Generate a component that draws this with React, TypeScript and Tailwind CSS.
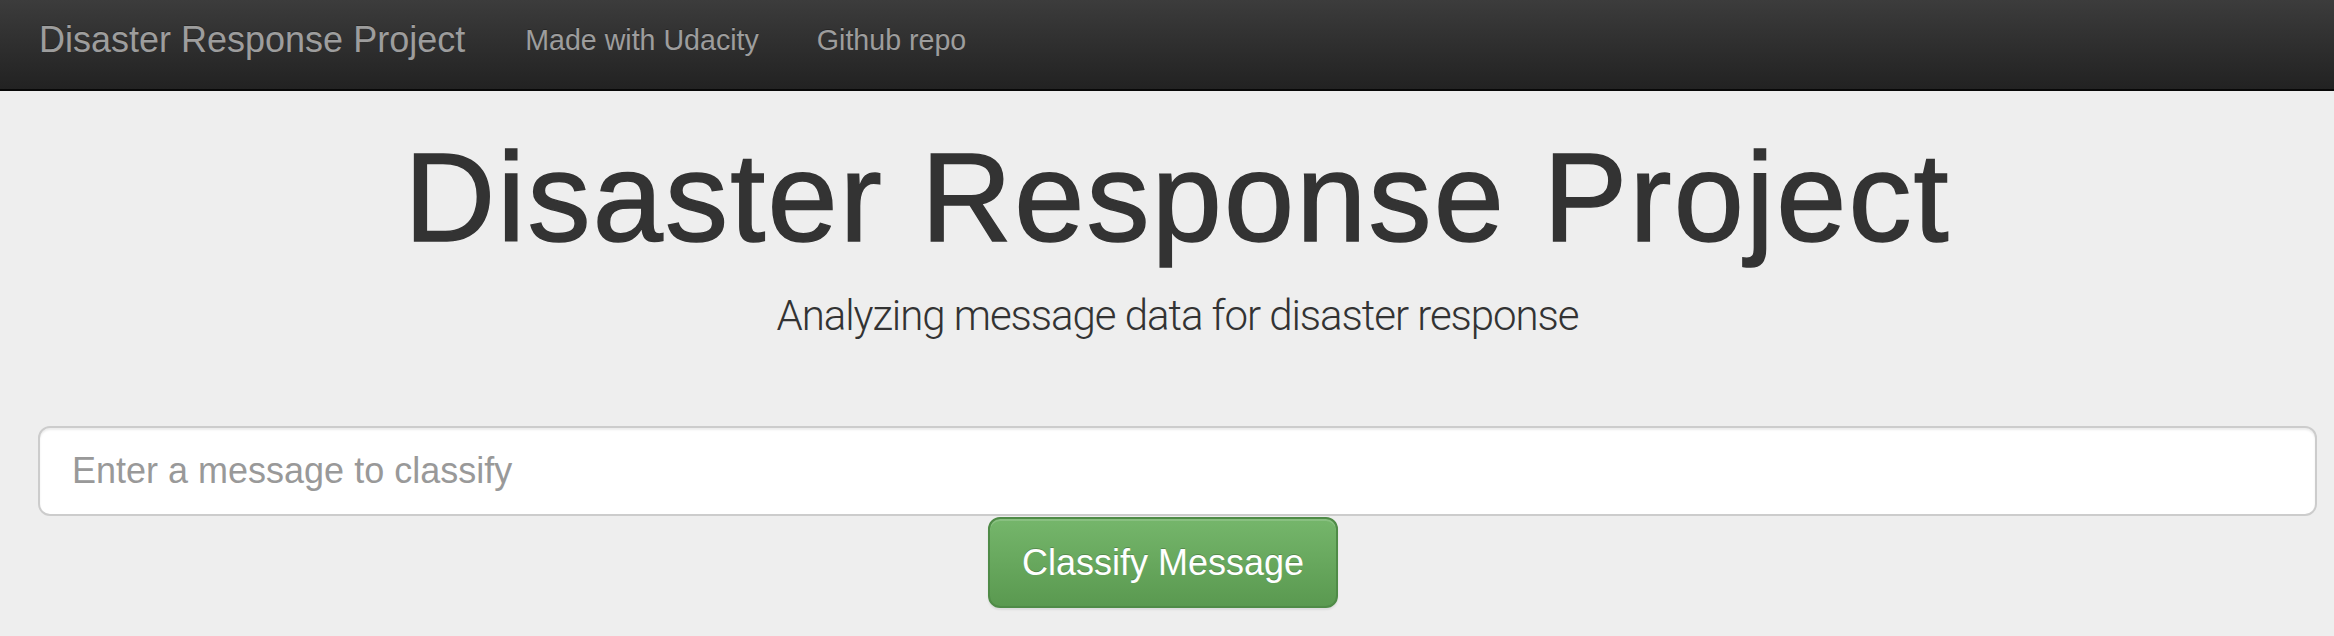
import React, { useState } from 'react';

const navLinks = ['Made with Udacity', 'Github repo'];

const App: React.FC = () => {
  const [message, setMessage] = useState('');

  return (
    <div className="min-h-screen bg-[#eeeeee] font-['Liberation_Sans',Arial,sans-serif]">
      <nav className="h-[91px] bg-gradient-to-b from-[#3c3c3c] to-[#222222] border-b-2 border-[#080808]">
        <div className="flex items-center h-full pb-[10px] pl-[39px]">
          <a href="#" className="text-[36px] leading-[40px] text-[#9d9d9d] [text-shadow:0_-1px_0_rgba(0,0,0,0.25)]">
            Disaster Response Project
          </a>
          <ul className="flex ml-[60px] gap-[58px]">
            {navLinks.map((link) => (
              <li key={link}>
                <a href="#" className="text-[28.6px] leading-[40px] text-[#9d9d9d] [text-shadow:0_-1px_0_rgba(0,0,0,0.25)]">
                  {link}
                </a>
              </li>
            ))}
          </ul>
        </div>
      </nav>

      <div className="pl-[38px] pr-[17px]">
        <h1 className="mt-[37px] text-center text-[126px] leading-[140px] tracking-[2.2px] text-[#333333] [-webkit-text-stroke:1.5px_#333333]">
          Disaster Response Project
        </h1>
        <p className="mt-[23px] text-center text-[42px] leading-[50px] font-light tracking-[-1.05px] text-[#333333] font-['Roboto',sans-serif]">
          Analyzing message data for disaster response
        </p>

        <form className="mt-[85px]" onSubmit={(e) => e.preventDefault()}>
          <input
            type="text"
            value={message}
            onChange={(e) => setMessage(e.target.value)}
            placeholder="Enter a message to classify"
            className="block w-full h-[90px] px-[32px] bg-white border-2 border-[#cccccc] rounded-[12px] text-[36px] text-[#555555] placeholder:text-[#999999] shadow-[inset_0_2px_2px_rgba(0,0,0,0.075)] outline-none"
          />
          <div className="flex justify-center">
            <button
              type="submit"
              className="mt-px mr-[29px] h-[91px] w-[350px] rounded-[12px] border-2 border-[#4f8b47] bg-gradient-to-b from-[#75b66b] to-[#5a9950] text-[36px] text-white [text-shadow:0_-1px_0_rgba(0,0,0,0.2)] shadow-[inset_0_2px_0_rgba(255,255,255,0.15),0_2px_2px_rgba(0,0,0,0.075)]"
            >
              Classify Message
            </button>
          </div>
        </form>
      </div>
    </div>
  );
};

export default App;
